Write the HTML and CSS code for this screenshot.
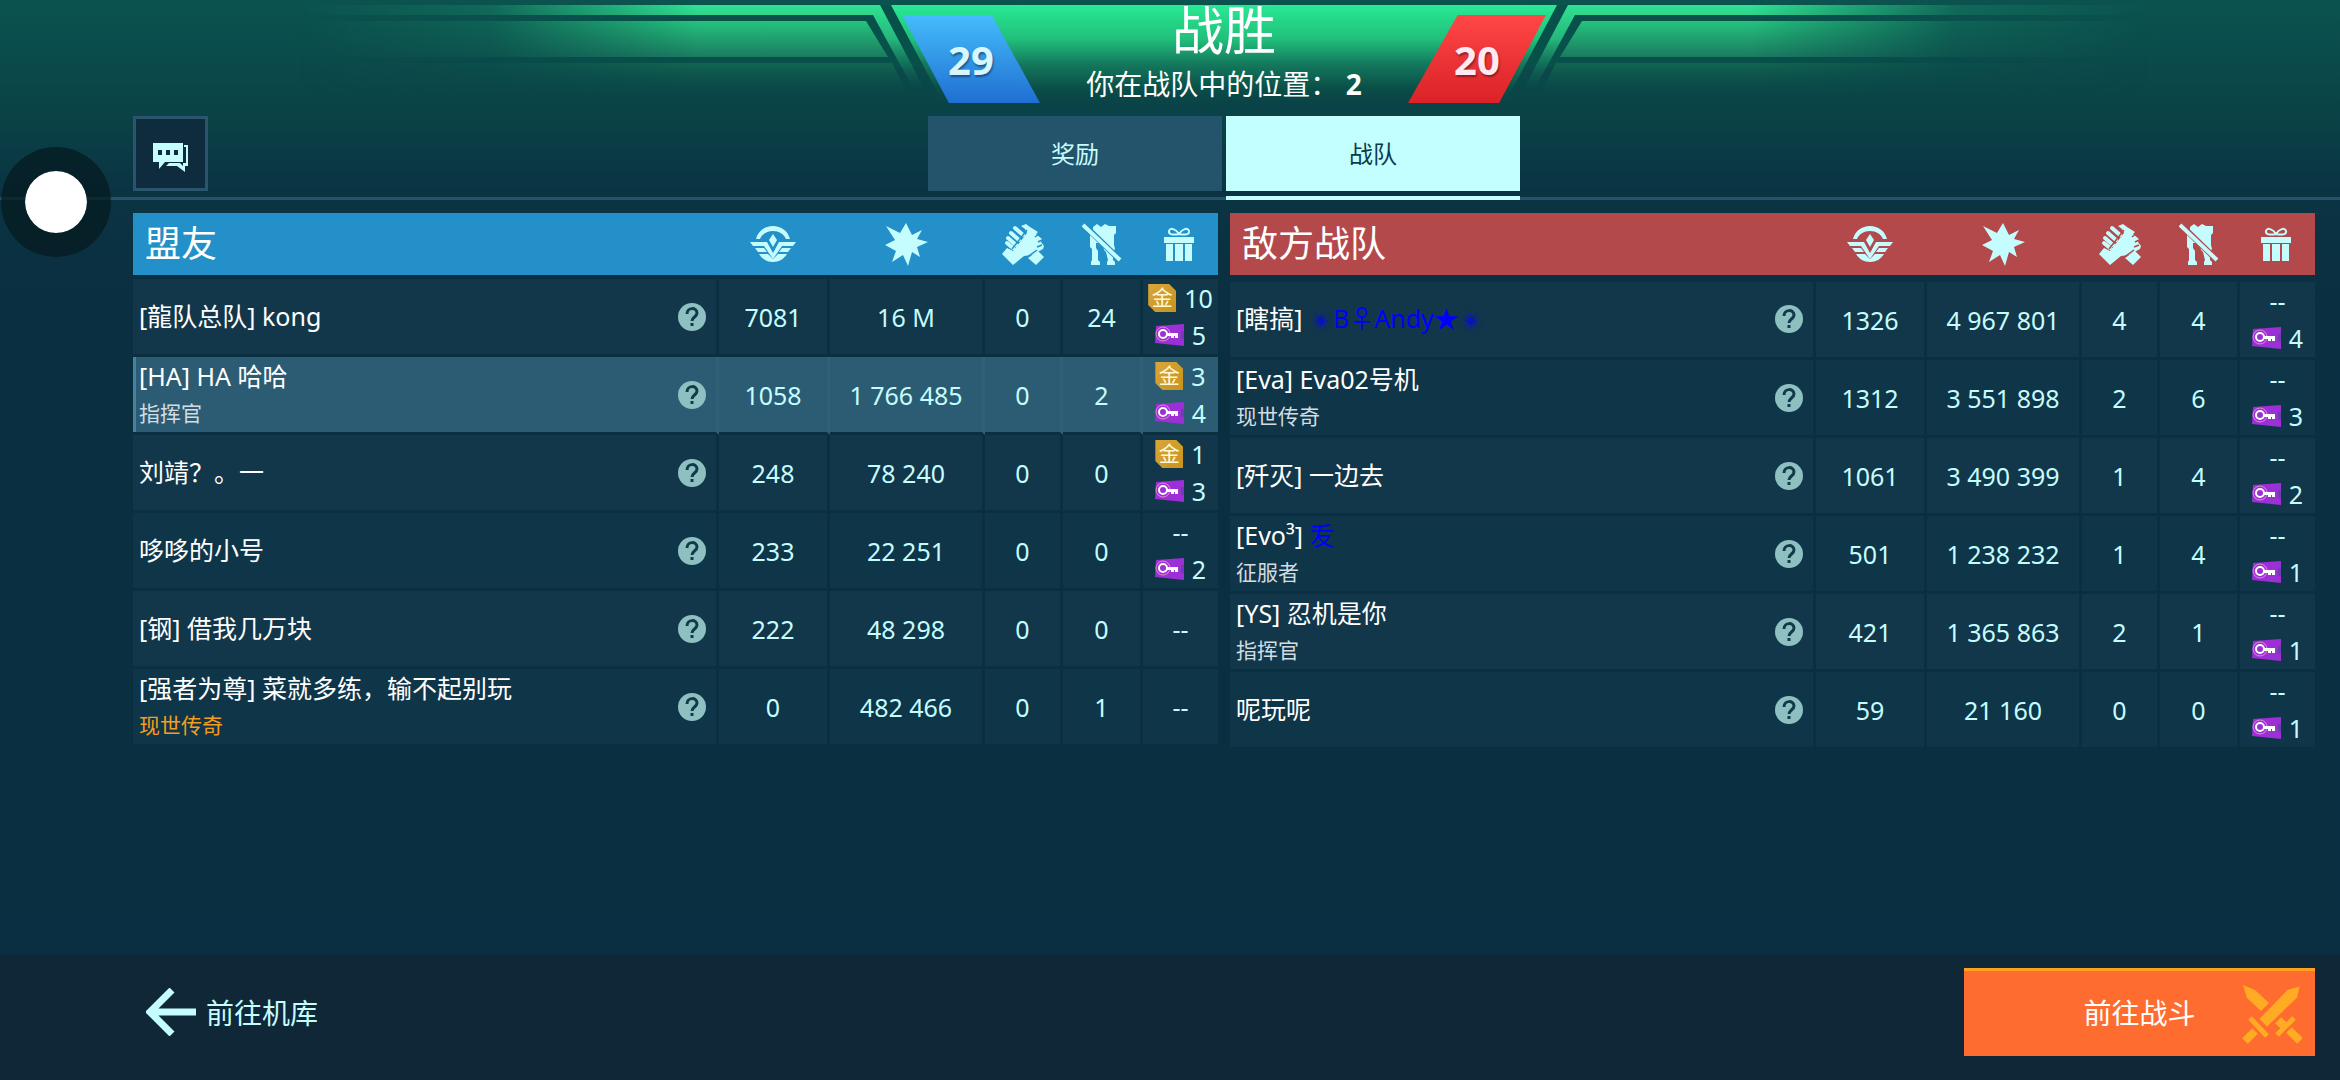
FILE: index.html
```html
<!DOCTYPE html>
<html lang="zh-CN">
<head>
    <meta charset="UTF-8">
    <meta name="viewport" content="width=device-width, initial-scale=1.0">
    <title>战胜</title>
    <link rel="stylesheet" href="styles.css">
</head>
<body>
    <!-- Icon set -->
    <svg class="sprite" aria-hidden="true">
        <symbol id="medal" viewBox="0 0 46 36">
            <path d="M6 13C8 5 15 0 23 0s15 5 17 13h-4C34 8 29 5 23 5s-11 3-13 8z"/>
            <path d="M23 8l4 6-4 7-4-7z"/>
            <path d="M0 16h17l6 11 6-11h17l-3 4H32l-9 13-9-13H3z"/>
            <path d="M5 22h9l3 4H8zM41 22h-9l-3 4h9z"/>
            <path d="M9 28h9l5 5 5-5h9c-3 5-8 8-14 8s-11-3-14-8z"/>
        </symbol>
        <symbol id="blast" viewBox="0 0 43 43">
            <path d="M21 0l6 12 10-5-5 9 11 3-11 5 3 10-8-5-4 14-5-11-11 7 4-11-11-6 10-5L1 3l14 7z"/>
        </symbol>
        <symbol id="hands" viewBox="0 0 42 41">
            <path d="M19 2l5-2 4 3 8 5-2 2 6 5-1 3 3 4-1 3-11 6-8 1-11 9L0 30l5-6 6 3L25 9l-2-4z"/>
            <path d="M36 27l6 6-8 8-8-7z"/>
            <path class="fingers" d="M13 4l8 7M9 9l8 7M6 14l8 7M5 19l6 5"/>
            <path class="cut" d="M25 6L10 25M33 13l4-3M36 18l4-2M35 23l5-2M24 34l11-8"/>
        </symbol>
        <symbol id="robot" viewBox="0 0 40 42">
            <path d="M11 4l4-3 4 3 4-3 4 2h7v7l-2 2v10l1 4-2 3v8l2 2v3h-8v-3l1-2-2-8-2-2-1-7h-7v5l2 3v9l2 2v3H9v-3l1-2V26l-2-2V12l3-2z"/>
            <path class="slash-gap" d="M2 2l36 35"/>
            <path class="slash" d="M1 2l37 35"/>
        </symbol>
        <symbol id="gift" viewBox="0 0 30 34">
            <path class="bow" d="M15 7c-3-5-9-7-10-3s5 4 10 3c3-5 9-7 10-3s-5 4-10 3z"/>
            <path d="M0 10h30v6H0zM2 17h7v17H2zM11 17h8v17h-8zM21 17h7v17h-7z"/>
        </symbol>
        <symbol id="help" viewBox="0 0 28 28">
            <circle cx="14" cy="14" r="14"/>
            <path class="mark" d="M9 11c0-7 10-7 10-1 0 4-5 4-5 8"/>
            <path class="mark" d="M14 20v3"/>
        </symbol>
        <symbol id="key" viewBox="0 0 29 22">
            <path fill="#9c2fd6" d="M1 2l28-2v22L0 19z"/>
            <path fill="#6d3fae" d="M26 7h3v8h-3z"/>
            <circle cx="8" cy="10" r="7" fill="none" stroke="#e88bd0" stroke-width="1"/>
            <circle cx="8" cy="10" r="4" fill="none" stroke="#fff" stroke-width="2"/>
            <path fill="#fff" d="M12 9h11v5h-3v-2h-1v2h-3v-2h-4z"/>
        </symbol>
    </svg>

    <header class="banner">
        <svg class="banner-art" viewBox="-1091 0 2182 110" preserveAspectRatio="xMidYMin slice" aria-hidden="true">
            <defs>
                <linearGradient id="panel" x1="0" y1="5" x2="0" y2="103" gradientUnits="userSpaceOnUse">
                    <stop offset="0" stop-color="#29e992"/>
                    <stop offset=".35" stop-color="#20bf7b"/>
                    <stop offset=".6" stop-color="#14795d"/>
                    <stop offset=".85" stop-color="#0a4f48"/>
                    <stop offset="1" stop-color="#0a4545" stop-opacity="0"/>
                </linearGradient>
                <linearGradient id="band" x1="0" y1="5" x2="0" y2="92" gradientUnits="userSpaceOnUse">
                    <stop offset="0" stop-color="#2fe292"/>
                    <stop offset=".4" stop-color="#26b57b"/>
                    <stop offset="1" stop-color="#0e5a4f" stop-opacity="0"/>
                </linearGradient>
                <linearGradient id="inner" x1="0" y1="21" x2="0" y2="57" gradientUnits="userSpaceOnUse">
                    <stop offset="0" stop-color="#25c37e"/>
                    <stop offset="1" stop-color="#1b7b60"/>
                </linearGradient>
                <linearGradient id="low" x1="0" y1="63" x2="0" y2="100" gradientUnits="userSpaceOnUse">
                    <stop offset="0" stop-color="#126551"/>
                    <stop offset="1" stop-color="#0b4a48" stop-opacity="0"/>
                </linearGradient>
                <linearGradient id="fade" x1="-926" y1="0" x2="-281" y2="0" gradientUnits="userSpaceOnUse">
                    <stop offset="0" stop-color="#000"/>
                    <stop offset=".3" stop-color="#2a2a2a"/>
                    <stop offset=".47" stop-color="#999"/>
                    <stop offset=".62" stop-color="#fff"/>
                </linearGradient>
                <mask id="side-mask" maskUnits="userSpaceOnUse" x="-926" y="0" width="646" height="110">
                    <path fill="url(#fade)" d="M-926 0h646v110h-646z"/>
                </mask>
                <g id="side" mask="url(#side-mask)">
                    <path fill="#07514a" d="M-926 5h593l32 62h-625z"/>
                    <path fill="url(#band)" d="M-926 5h582l46 87h-11l-42-77h-575z"/>
                    <path fill="url(#inner)" d="M-926 21h568l22 36h-590z"/>
                    <path fill="url(#low)" d="M-926 63h594l19 37h-613z"/>
                </g>
            </defs>
            <use href="#side"/>
            <use href="#side" transform="scale(-1 1)"/>
            <path fill="url(#panel)" d="M-333 5h666l-52 98h-562z"/>
        </svg>
        <div class="scoreboard">
            <span class="score score-ally">29</span>
            <div class="result">
                <h1>战胜</h1>
                <p>你在战队中的位置： <b>2</b></p>
            </div>
            <span class="score score-enemy">20</span>
        </div>
    </header>

    <nav class="toolbar">
        <button type="button" class="chat" aria-label="聊天">
            <svg viewBox="0 0 36 30" width="36" height="30" aria-hidden="true">
                <path d="M0 0h30v19H12l-6 7v-7H0z"/>
                <path d="M31 2h4v21h-3v6l-8-6H13l3-3h11l3 3v-3h3V4h-2z"/>
                <path class="dots" d="M5 7h4v5H5zM13 7h4v5h-4zM21 7h4v5h-4z"/>
            </svg>
        </button>
        <div class="tabs">
            <button type="button" class="tab">奖励</button>
            <button type="button" class="tab active">战队</button>
        </div>
    </nav>

    <main class="teams">
        <table class="team ally">
            <colgroup><col><col class="c-honor"><col class="c-damage"><col class="c-assist"><col class="c-kill"><col class="c-gift"></colgroup>
            <thead>
                <tr>
                    <th>盟友</th>
                    <th><svg width="46" height="36"><use href="#medal"/></svg></th>
                    <th><svg width="43" height="43"><use href="#blast"/></svg></th>
                    <th><svg width="42" height="41"><use href="#hands"/></svg></th>
                    <th><svg width="40" height="42"><use href="#robot"/></svg></th>
                    <th><svg width="30" height="34"><use href="#gift"/></svg></th>
                </tr>
            </thead>
            <tbody>
                <tr>
                    <td><div class="player"><div>[龍队总队] kong</div><button type="button" aria-label="详情"><svg><use href="#help"/></svg></button></div></td>
                    <td>7081</td><td>16 M</td><td>0</td><td>24</td>
                    <td><div class="loot"><i>金</i>10</div><div class="loot"><svg><use href="#key"/></svg>5</div></td>
                </tr>
                <tr class="me">
                    <td><div class="player"><div>[HA] HA 哈哈<small>指挥官</small></div><button type="button" aria-label="详情"><svg><use href="#help"/></svg></button></div></td>
                    <td>1058</td><td>1 766 485</td><td>0</td><td>2</td>
                    <td><div class="loot"><i>金</i>3</div><div class="loot"><svg><use href="#key"/></svg>4</div></td>
                </tr>
                <tr>
                    <td><div class="player"><div>刘靖？。一</div><button type="button" aria-label="详情"><svg><use href="#help"/></svg></button></div></td>
                    <td>248</td><td>78 240</td><td>0</td><td>0</td>
                    <td><div class="loot"><i>金</i>1</div><div class="loot"><svg><use href="#key"/></svg>3</div></td>
                </tr>
                <tr>
                    <td><div class="player"><div>哆哆的小号</div><button type="button" aria-label="详情"><svg><use href="#help"/></svg></button></div></td>
                    <td>233</td><td>22 251</td><td>0</td><td>0</td>
                    <td><div class="loot">--</div><div class="loot"><svg><use href="#key"/></svg>2</div></td>
                </tr>
                <tr>
                    <td><div class="player"><div>[钢] 借我几万块</div><button type="button" aria-label="详情"><svg><use href="#help"/></svg></button></div></td>
                    <td>222</td><td>48 298</td><td>0</td><td>0</td>
                    <td><div class="loot">--</div></td>
                </tr>
                <tr>
                    <td><div class="player"><div>[强者为尊] 菜就多练，输不起别玩<small class="legend">现世传奇</small></div><button type="button" aria-label="详情"><svg><use href="#help"/></svg></button></div></td>
                    <td>0</td><td>482 466</td><td>0</td><td>1</td>
                    <td><div class="loot">--</div></td>
                </tr>
            </tbody>
        </table>

        <table class="team enemy">
            <colgroup><col><col class="c-honor"><col class="c-damage"><col class="c-assist"><col class="c-kill"><col class="c-gift"></colgroup>
            <thead>
                <tr>
                    <th>敌方战队</th>
                    <th><svg width="46" height="36"><use href="#medal"/></svg></th>
                    <th><svg width="43" height="43"><use href="#blast"/></svg></th>
                    <th><svg width="42" height="41"><use href="#hands"/></svg></th>
                    <th><svg width="40" height="42"><use href="#robot"/></svg></th>
                    <th><svg width="30" height="34"><use href="#gift"/></svg></th>
                </tr>
            </thead>
            <tbody>
                <tr>
                    <td><div class="player"><div>[瞎搞] <span class="blue"><span class="sun">☀</span>B♀Andy★<span class="sun">☀</span></span></div><button type="button" aria-label="详情"><svg><use href="#help"/></svg></button></div></td>
                    <td>1326</td><td>4 967 801</td><td>4</td><td>4</td>
                    <td><div class="loot">--</div><div class="loot"><svg><use href="#key"/></svg>4</div></td>
                </tr>
                <tr>
                    <td><div class="player"><div>[Eva] Eva02号机<small>现世传奇</small></div><button type="button" aria-label="详情"><svg><use href="#help"/></svg></button></div></td>
                    <td>1312</td><td>3 551 898</td><td>2</td><td>6</td>
                    <td><div class="loot">--</div><div class="loot"><svg><use href="#key"/></svg>3</div></td>
                </tr>
                <tr>
                    <td><div class="player"><div>[歼灭] 一边去</div><button type="button" aria-label="详情"><svg><use href="#help"/></svg></button></div></td>
                    <td>1061</td><td>3 490 399</td><td>1</td><td>4</td>
                    <td><div class="loot">--</div><div class="loot"><svg><use href="#key"/></svg>2</div></td>
                </tr>
                <tr>
                    <td><div class="player"><div>[Evo³] <span class="blue">叐</span><small>征服者</small></div><button type="button" aria-label="详情"><svg><use href="#help"/></svg></button></div></td>
                    <td>501</td><td>1 238 232</td><td>1</td><td>4</td>
                    <td><div class="loot">--</div><div class="loot"><svg><use href="#key"/></svg>1</div></td>
                </tr>
                <tr>
                    <td><div class="player"><div>[YS] 忍机是你<small>指挥官</small></div><button type="button" aria-label="详情"><svg><use href="#help"/></svg></button></div></td>
                    <td>421</td><td>1 365 863</td><td>2</td><td>1</td>
                    <td><div class="loot">--</div><div class="loot"><svg><use href="#key"/></svg>1</div></td>
                </tr>
                <tr>
                    <td><div class="player"><div>呢玩呢</div><button type="button" aria-label="详情"><svg><use href="#help"/></svg></button></div></td>
                    <td>59</td><td>21 160</td><td>0</td><td>0</td>
                    <td><div class="loot">--</div><div class="loot"><svg><use href="#key"/></svg>1</div></td>
                </tr>
            </tbody>
        </table>
    </main>

    <footer class="footer">
        <button type="button" class="back">
            <svg viewBox="0 0 50 48" width="50" height="48" aria-hidden="true">
                <path d="M26 2L4 24l22 22M4 24h46"/>
            </svg>
            前往机库
        </button>
        <button type="button" class="battle">
            前往战斗
            <svg viewBox="0 0 60 60" width="60" height="60" aria-hidden="true">
                <path d="M1 1l12 5 14 13-8 8L5 14z"/>
                <path class="grip" d="M47 46l11 11M36 42l6-6"/>
                <path class="guard" d="M52 34L35 51"/>
                <path class="blade" d="M59 1l-3 13-31 30-9-9L45 5z"/>
                <path class="guard" d="M8 34l17 18"/>
                <path class="grip" d="M13 47L3 57"/>
            </svg>
        </button>
    </footer>

    <!-- Floating touch button -->
    <button type="button" class="touch" aria-label="悬浮按钮"></button>
</body>
</html>
```
FILE: styles.css
```css
* {
    box-sizing: border-box;
}

body {
    margin: 0;
    min-height: 100vh;
    display: flex;
    flex-direction: column;
    position: relative;
    font-family: "Noto Sans", "Noto Sans CJK SC", sans-serif;
    font-size: 25px;
    color: #c5fdff;
    background: linear-gradient(#0b534f 0, #0a4347 110px, #0a3443 190px, #0a2f41 300px, #0b2f42 100%);
}

button {
    font: inherit;
    color: inherit;
    border: none;
    padding: 0;
    cursor: pointer;
}

svg {
    display: block;
    fill: currentColor;
}

.sprite {
    position: absolute;
    width: 0;
    height: 0;
}

/* Banner */
.banner {
    position: relative;
    height: 116px;
    padding: 0 25px 0 133px;
}

.banner-art {
    position: absolute;
    top: 0;
    left: 133px;
    width: calc(100% - 158px);
    height: 110px;
}

.scoreboard {
    position: relative;
    display: flex;
    justify-content: space-between;
    width: 644px;
    margin: 0 auto;
}

.score {
    width: 138px;
    height: 88px;
    margin-top: 15px;
    line-height: 90px;
    text-align: center;
    font-size: 40px;
    font-weight: bold;
    text-shadow: 1px 2px 2px rgba(0, 0, 0, 0.4);
}

.score-ally {
    color: #d8f6ff;
    background: linear-gradient(#45bdfb, #1f6fd2);
    clip-path: polygon(0 0, 65% 0, 100% 100%, 34% 100%);
}

.score-enemy {
    color: #ffe9f2;
    background: linear-gradient(#ff4746, #da2228);
    clip-path: polygon(36% 0, 100% 0, 66% 100%, 0 100%);
}

.result {
    text-align: center;
    color: #fff;
}

.result h1 {
    margin: 0 0 4px;
    font-size: 52px;
    font-weight: normal;
    line-height: 60px;
}

.result p {
    margin: 0;
    font-size: 28px;
    line-height: 40px;
    white-space: nowrap;
}

/* Toolbar */
.toolbar {
    display: grid;
    grid-template-columns: 1fr auto 1fr;
    padding: 0 25px 6px 133px;
    border-bottom: 3px solid #28526a;
}

.chat {
    display: flex;
    align-items: center;
    justify-content: center;
    width: 75px;
    height: 75px;
    padding-top: 8px;
    background: #0e2c3e;
    border: 3px solid #2a566d;
}

.chat .dots {
    fill: #0e2c3e;
}

.tabs {
    display: flex;
    gap: 4px;
}

.tab {
    position: relative;
    width: 294px;
    height: 75px;
    padding-bottom: 3px;
    font-size: 24px;
    background: #24536c;
}

.tab.active {
    color: #0c3c4b;
    background: #c3fffe;
}

.tab.active::after {
    content: "";
    position: absolute;
    left: 0;
    right: 0;
    bottom: -9px;
    height: 4px;
    background: #c3fffe;
}

/* Team tables */
.teams {
    flex: 1;
    display: flex;
    align-items: flex-start;
    gap: 12px;
    padding: 13px 25px 20px 133px;
}

.team {
    flex: 1;
    width: 0;
    table-layout: fixed;
    border-spacing: 0;
    text-align: center;
}

.ally {
    --head: #2390c9;
    --gap: 4px;
}

.enemy {
    --head: #b4494c;
    --gap: 7px;
}

.c-honor { width: 111px; }
.c-damage { width: 155px; }
.c-assist { width: 78px; }
.c-kill { width: 80px; }
.c-gift { width: 75px; }

th {
    height: calc(62px + var(--gap));
    padding: 0 3px 0 0;
    border-bottom: var(--gap) solid transparent;
    background: var(--head);
    background-clip: padding-box;
}

th:first-child {
    padding-left: 12px;
    text-align: left;
    font-size: 36px;
    font-weight: normal;
    line-height: 62px;
    color: #fff;
}

th svg {
    margin: 0 auto;
}

.fingers {
    fill: none;
    stroke: currentColor;
    stroke-width: 4;
    stroke-linecap: round;
}

.cut {
    fill: none;
    stroke: var(--head);
    stroke-width: 1.5;
}

.slash,
.slash-gap {
    stroke: currentColor;
    stroke-width: 4;
}

.slash-gap {
    stroke: var(--head);
    stroke-width: 6;
}

.bow {
    fill: none;
    stroke: currentColor;
    stroke-width: 2;
}

td {
    height: 78px;
    padding: 0;
    border: 0 solid transparent;
    border-width: 0 3px 3px 0;
    background: #12374a;
    background-clip: padding-box;
}

td:last-child {
    border-right-width: 0;
}

tr:nth-child(even) td {
    background-color: #0f3548;
}

tr.me td {
    background-color: #2c5c73;
    border-right-color: #315f77;
}

tr.me td:first-child {
    box-shadow: inset 3px 0 #4482a0;
}

.player {
    display: flex;
    align-items: center;
    justify-content: space-between;
    padding: 0 10px 0 6px;
    text-align: left;
    line-height: 37px;
    color: #fff;
}

.player small {
    display: block;
    font-size: 21px;
    color: #d3dde1;
}

.player small.legend {
    color: #f79d1e;
}

.player button {
    flex: none;
    border-radius: 50%;
    background: none;
    color: #8fc0c1;
}

.player button svg {
    width: 28px;
    height: 28px;
}

.mark {
    fill: none;
    stroke: #123a4a;
    stroke-width: 3;
}

.blue {
    color: #0000ff;
}

.sun {
    display: inline-block;
    width: 24px;
    text-align: center;
    font-size: 14px;
    opacity: 0.6;
    vertical-align: middle;
    text-shadow: 0 0 8px #0000ff;
}

.loot {
    display: flex;
    align-items: center;
    justify-content: center;
    gap: 8px;
    height: 37px;
}

.loot svg {
    width: 29px;
    height: 22px;
}

.loot i {
    width: 28px;
    height: 28px;
    font-size: 21px;
    font-style: normal;
    line-height: 27px;
    color: #fff7d6;
    background: linear-gradient(135deg, #d9a63a, #c8931c);
    clip-path: polygon(0 0, 75% 0, 100% 25%, 100% 100%, 25% 100%, 0 75%);
}

/* Footer */
.footer {
    display: flex;
    justify-content: space-between;
    align-items: flex-start;
    height: 125px;
    padding: 13px 25px 0 146px;
    background: #0f2737;
}

.back {
    display: flex;
    align-items: center;
    gap: 10px;
    height: 88px;
    font-size: 28px;
    background: none;
}

.back svg {
    fill: none;
    stroke: currentColor;
    stroke-width: 7;
}

.battle {
    position: relative;
    width: 351px;
    height: 88px;
    padding-bottom: 4px;
    font-size: 28px;
    color: #fff;
    background: #ff6c2f;
    border-top: 3px solid #ffa01f;
}

.battle svg {
    position: absolute;
    top: 13px;
    right: 13px;
    color: #ffab24;
}

.blade {
    stroke: #ff6c2f;
    stroke-width: 2;
}

.guard,
.grip {
    stroke: currentColor;
    stroke-width: 5;
}

.grip {
    stroke-width: 8;
}

/* Touch dot */
.touch {
    position: absolute;
    top: 147px;
    left: 1px;
    width: 110px;
    height: 110px;
    border: 24px solid rgba(4, 24, 30, 0.7);
    border-radius: 50%;
    background: #fff;
    background-clip: padding-box;
}
```
